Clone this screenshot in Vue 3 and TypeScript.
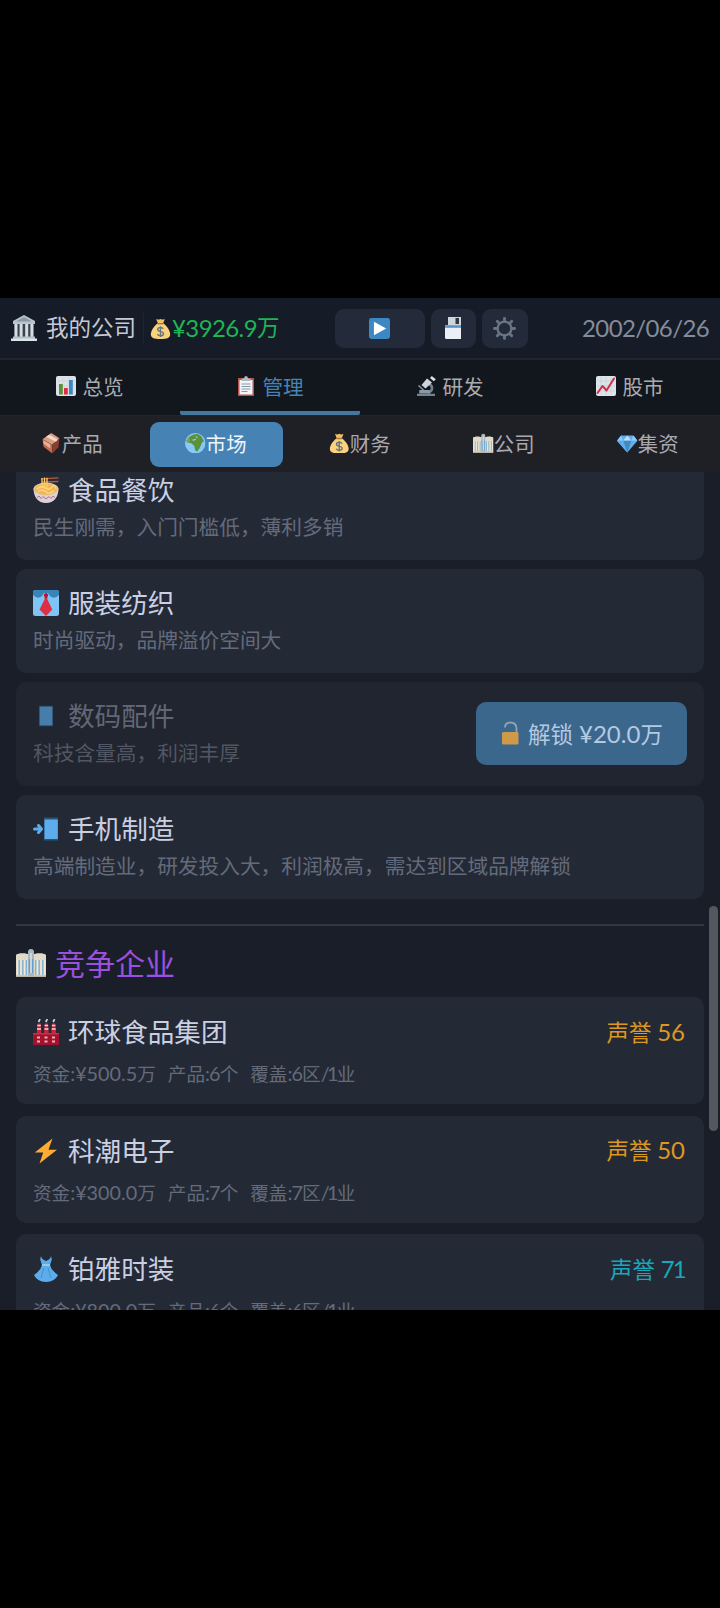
<script setup lang="ts">
interface Tab {
  icon: string
  label: string
}
interface Industry {
  icon: string
  name: string
  desc: string
  price?: string
}
interface Rival {
  icon: string
  name: string
  fame: number
  strong?: boolean
  funds: string
  products: number
  regions: number
}

const tabs: Tab[] = [
  { icon: 'chart', label: '总览' },
  { icon: 'clipboard', label: '管理' },
  { icon: 'microscope', label: '研发' },
  { icon: 'trend', label: '股市' },
]
const activeTab = '管理'

const subTabs: Tab[] = [
  { icon: 'box', label: '产品' },
  { icon: 'globe', label: '市场' },
  { icon: 'bag', label: '财务' },
  { icon: 'city', label: '公司' },
  { icon: 'gem', label: '集资' },
]
const activeSub = '市场'

const industries: Industry[] = [
  { icon: 'noodle', name: '食品餐饮', desc: '民生刚需，入门门槛低，薄利多销' },
  { icon: 'tie', name: '服装纺织', desc: '时尚驱动，品牌溢价空间大' },
  { icon: 'device', name: '数码配件', desc: '科技含量高，利润丰厚', price: '20.0' },
  { icon: 'phone', name: '手机制造', desc: '高端制造业，研发投入大，利润极高，需达到区域品牌解锁' },
]

const rivals: Rival[] = [
  { icon: 'factory', name: '环球食品集团', fame: 56, funds: '500.5', products: 6, regions: 6 },
  { icon: 'bolt', name: '科潮电子', fame: 50, funds: '300.0', products: 7, regions: 7 },
  { icon: 'dress', name: '铂雅时装', fame: 71, strong: true, funds: '800.0', products: 6, regions: 6 },
]
</script>

<template>
  <svg class="defs" aria-hidden="true">
    <symbol id="i-bank" viewBox="0 0 26 26">
      <path d="M13 0 24 6v3H2V6z" fill="#b9c5ce" />
      <path d="M13 2 21 6.5H5z" fill="#8998a4" />
      <path d="M3 9h20v13H3z" fill="#39434e" />
      <path d="M3.500 9h3v13h-3zM8.600 9h3v13h-3zM14.200 9h3v13h-3zM19.400 9h3v13h-3z" fill="#d5dde3" />
      <path d="M2 21.500h22V24H2z" fill="#b4bfc8" />
      <path d="M0 23.500h26V26H0z" fill="#dbe3e8" />
    </symbol>
    <symbol id="i-bag" viewBox="0 0 24 24">
      <path d="M7 1q2.500 1.500 5 0 2.500 1.500 5 0l-2 5H9z" fill="#f0c266" />
      <path d="M9 6h6c4 3 8 8 8 12.500C23 22.500 20 24 12 24S1 22.500 1 18.500C1 14 5 9 9 6z" fill="#fbd27c" />
      <path d="M8.500 6.500h7" stroke="#a9793a" stroke-width="1.600" />
      <path d="M15.300 12.300c-.8-1.200-2-1.500-3.300-1.500-2 0-3.200.9-3.200 2.400 0 3.400 6.600 1.400 6.600 4.700 0 1.500-1.400 2.400-3.400 2.400-1.600 0-2.900-.6-3.500-1.800M12 9.300v12.500" fill="none" stroke="#67757f" stroke-width="1.600" />
    </symbol>
    <symbol id="i-play" viewBox="0 0 22 22">
      <rect width="22" height="22" rx="2.500" fill="#3b88c3" />
      <path d="M5.200 4 18 11 5.200 18z" fill="#fff" />
    </symbol>
    <symbol id="i-save" viewBox="0 0 20 22">
      <path d="M5 0h13v8H5z" fill="#ccd6dd" />
      <path d="M12.500 1h3.500v6h-3.500z" fill="#31373d" />
      <path d="M2 8h16v14H3.500Q2 22 2 20.500z" fill="#e9eff4" />
      <path d="M2 8.200h16v2.600H2z" fill="#5a93cb" />
    </symbol>
    <symbol id="i-gear" viewBox="0 0 24 24">
      <circle cx="12" cy="12" r="7.200" fill="none" stroke="#66757f" stroke-width="2.500" />
      <path d="M12 1.500v3M12 19.500v3M1.500 12h3M19.500 12h3M4.500 4.500l2 2M17.500 17.500l2 2M4.500 19.500l2-2M17.500 6.500l2-2" stroke="#66757f" stroke-width="3" stroke-linecap="round" />
    </symbol>
    <symbol id="i-chart" viewBox="0 0 20 20">
      <rect width="20" height="20" rx="2" fill="#dbe3e8" />
      <path d="M6.500 1v18M13 1v18M1 5h18M1 10h18" stroke="#c5d0d8" stroke-width=".6" />
      <path d="M3 8h3.800v10.500H3z" fill="#5c9139" />
      <path d="M8 12h3.800v6.500H8z" fill="#dd2e44" />
      <path d="M13 4h3.800v14.500H13z" fill="#3b88c3" />
    </symbol>
    <symbol id="i-clipboard" viewBox="0 0 20 20">
      <path d="M2 2h16v18H2z" fill="#b6534c" />
      <path d="M3.500 4h13v14.500h-13z" fill="#f1f5f7" />
      <path d="M5.500 5V2.500H8Q8 0 10 0t2 2.500h2.500V5z" fill="#aebbc3" />
      <path d="M5.500 8h9M5.500 10.500h9M5.500 13h9M5.500 15.500h6" stroke="#8a9aa4" stroke-width="1.100" />
    </symbol>
    <symbol id="i-microscope" viewBox="0 0 20 20">
      <path d="M1 17.700h18V20H1z" fill="#74838e" />
      <path d="M13 8c4 1.500 4.500 7-1 9" fill="none" stroke="#74838e" stroke-width="2.500" />
      <path d="m2.500 9.500 6 5.500M4 14.800h9v2H4z" stroke="#8999a6" stroke-width="1.500" fill="#8999a6" />
      <path d="m11 2.500 5 4-6.500 6-4-3.500z" fill="#ccd6dd" />
      <path d="m14 2 1.800-2 4 3.200-2 2z" fill="#d9e2e8" />
    </symbol>
    <symbol id="i-trend" viewBox="0 0 20 20">
      <rect width="20" height="20" rx="2" fill="#dde5ea" />
      <path d="M5 1v18M10 1v18M15 1v18M1 5h18M1 10h18M1 15h18" stroke="#bfcbd3" stroke-width=".6" />
      <path d="m1.500 17 5-7 4 4.500L18 2.500" fill="none" stroke="#d22f4a" stroke-width="2" stroke-linejoin="round" stroke-linecap="round" />
    </symbol>
    <symbol id="i-box" viewBox="0 0 20 20">
      <path d="M1.500 6 10 0l8 5-7 6.500z" fill="#d99e82" />
      <path d="m1.500 6 9.500 5.500V20l-8.500-6.500z" fill="#c1694f" />
      <path d="m11 11.500 7-6.500-1 9-6 6z" fill="#8a3f2e" />
      <path d="M5 3.700 8 1.600l8.500 5-2 1.900z" fill="#f3d9cb" />
      <path d="m2 7 7 4v4l-6.500-4.500z" fill="#e3b3a0" />
    </symbol>
    <symbol id="i-globe" viewBox="0 0 20 20">
      <circle cx="10" cy="10" r="10" fill="#88c9f9" />
      <path d="M4.500 3.500Q9 .2 13 1.200l3 2.300 2.500 4.500-2 1.500-2 5-2.500 3.500-2-1-1-4.500-3-2.500-4-1 .5-3.500z" fill="#5c913b" />
      <path d="m10 3 2.500 1-1 1.300zM7 6.500l3-1 1 1-3 1.300z" fill="#88c9f9" />
      <path d="M1 7.500 4.200 4 5 7.500 2 9.500z" fill="#70a856" />
    </symbol>
    <symbol id="i-city" viewBox="0 0 30 28">
      <path d="M0 6.500Q0 5 1.500 5t2.500-.8h5q1 .8 3 .8h6q2 0 3-.8h5q1 .8 2.500.8T30 6.500V28H0z" fill="#e2dac9" />
      <path d="M3.200 11v15M6.800 11v15M10.300 11v15M19.700 11v15M23.200 11v15M26.800 11v15" stroke="#7fb2d4" stroke-width="1.400" />
      <path d="M1.400 11v15M5 11v15M8.600 11v15M21.400 11v15M25 11v15M28.600 11v15" stroke="#f2ecdf" stroke-width="1" />
      <path d="M12 28V3q0-3 3-3t3 3v25z" fill="#aab7bf" />
      <path d="M13.500 10v14M16.500 10v14" stroke="#5f9fce" stroke-width="1.200" />
      <path d="M15 4v20" stroke="#e6edf1" stroke-width="1.200" />
      <path d="M0 26.500h30V28H0z" fill="#bdb5a5" />
    </symbol>
    <symbol id="i-gem" viewBox="0 0 20 20">
      <path d="M4 2.500h12l4 5L10 19 0 7.500z" fill="#5dadec" />
      <path d="M4 2.500 6 7.500H0zM16 2.500l-2 5h6z" fill="#8ccaf7" />
      <path d="M10 2.500 6 7.500h8z" fill="#bddff6" />
      <path d="m6 7.500 4 11.500 4-11.500z" fill="#4289c1" />
      <path d="M0 7.500h6L10 19z" fill="#5dadec" />
    </symbol>
    <symbol id="i-noodle" viewBox="0 0 26 26">
      <path d="M25.500.8 8 2M25.500 4.500 9 5" stroke="#ad5d3d" stroke-width="1.300" />
      <path d="M.5 11.500q.5 14 12.500 14.500 12-.5 12.500-14.500z" fill="#dcd3da" />
      <ellipse cx="13" cy="12" rx="12.500" ry="6.500" fill="#e0c7a8" />
      <ellipse cx="13" cy="12.200" rx="11.300" ry="5.500" fill="#f4b653" />
      <path d="M9 1v10M11.500 .5V11M14 .8V11" stroke="#ffcc6b" stroke-width="1.300" />
      <path d="M4 12q4-4 8-1t7-1 4 2M5 14.500q4-3 8 .3t8-1.300" fill="none" stroke="#ffd983" stroke-width="1.300" />
      <path d="m4 20.500 2-1.500 2 2.500 2-2 3 2.500 3-2.500 2 2 2-2.500 2 1.500" fill="none" stroke="#be6f80" stroke-width="1" />
    </symbol>
    <symbol id="i-tie" viewBox="0 0 26 26">
      <rect width="26" height="26" rx="2.500" fill="#7ec4f5" />
      <path d="M2.500 0h21Q26 0 26 2.500V5q-5 5-9 1l-2-3h-4L9 6q-4 4-9-1V2.500Q0 0 2.500 0z" fill="#3785b8" />
      <path d="m10.800 4.500 2.200-1.500 2.200 1.500-1 4.500 5 10.500L13 26l-6.500-6.500L11.800 9z" fill="#dd2e44" />
      <path d="m10.800 4.500 2.200 4.500 2.200-4.500L13 3z" fill="#a71b35" />
    </symbol>
    <symbol id="i-device" viewBox="0 0 26 26">
      <path d="M6 2.500h14v21H6z" fill="#20415a" />
      <path d="M6.500 3.500h13v19h-13z" fill="#5dadec" />
    </symbol>
    <symbol id="i-phone" viewBox="0 0 26 26">
      <path d="M11 1.500h14v23H11z" fill="#285472" />
      <path d="M11.500 3.500h13.300V23H11.500z" fill="#5dadec" />
      <path d="M1.500 13h7M5.500 9.500 8.500 13l-3 3.500" stroke="#5dadec" stroke-width="3" fill="none" stroke-linecap="round" stroke-linejoin="round" />
    </symbol>
    <symbol id="i-lock" viewBox="0 0 18 24">
      <path d="M4 6.500q0-5 5.500-5T15.500 7v5" fill="none" stroke="#aab8c2" stroke-width="1.800" />
      <rect x="1" y="11" width="16.500" height="12.500" rx="1.500" fill="#ffac33" />
    </symbol>
    <symbol id="i-factory" viewBox="0 0 26 26">
      <path d="M4.500 4.500h3.200l.8 10H3.700zM11.800 4.500H15l.8 10H11zM19.100 4.500h3.200l.8 10h-4.800z" fill="#c8243f" />
      <path d="M4.300 6.500h3.500M4 10h4M11.600 6.500h3.500M11.400 10h4M18.900 6.500h3.500M18.700 10h4" stroke="#f1d6da" stroke-width="1.300" />
      <path d="m5.500 3 1.500-3M12.800 3l1.500-3M20.100 3l1.500-3" stroke="#ccd6dd" stroke-width="1.700" />
      <path d="M0 14h26v12H0z" fill="#a3122d" />
      <path d="M0 14h26v1.500H0z" fill="#d02c45" />
      <path d="M4 18.500h3M11.500 18.500h3M19 18.500h3M4 22.500h3M11.500 22.500h3M19 22.500h3" stroke="#e9b2bb" stroke-width="2" />
    </symbol>
    <symbol id="i-bolt" viewBox="0 0 26 26">
      <path d="M19.500.5 1.800 14.500h8.400L6.500 25.500 24 11.800h-8.500z" fill="#ffac33" />
    </symbol>
    <symbol id="i-dress" viewBox="0 0 26 26">
      <path d="M8 0q.5 3 2 3.500L13 5l3-1.500Q17.500 3 18 0l.8 3.500L17 9q1 5 8 10-3 6.500-12 7-9-.5-12-7 7-5 8-10L7.200 3.500z" fill="#5dadec" />
      <path d="M9 9h8" stroke="#a6d3f2" stroke-width="1.500" />
      <path d="m11 12-3 10M15 12l3 10" stroke="#4492cf" stroke-width="1" />
    </symbol>
  </svg>

  <div class="screen">
    <div class="app">
      <header class="topbar">
        <svg class="bank"><use href="#i-bank" /></svg>
        <span class="company">我的公司</span>
        <span class="money">
          <svg class="bag"><use href="#i-bag" /></svg><span class="num">¥3926.9</span>万
        </span>
        <div class="controls">
          <button class="ctl wide"><svg class="play"><use href="#i-play" /></svg></button>
          <button class="ctl"><svg class="save"><use href="#i-save" /></svg></button>
          <button class="ctl"><svg class="gear"><use href="#i-gear" /></svg></button>
        </div>
        <span class="date">2002/06/26</span>
      </header>

      <nav class="tabs">
        <a v-for="t in tabs" :key="t.label" class="tab" :class="{ on: t.label === activeTab }">
          <svg class="tab-icon"><use :href="`#i-${t.icon}`" /></svg>{{ t.label }}
        </a>
      </nav>

      <nav class="subtabs">
        <a v-for="t in subTabs" :key="t.label" class="subtab" :class="{ on: t.label === activeSub }">
          <svg class="sub-icon"><use :href="`#i-${t.icon}`" /></svg>{{ t.label }}
        </a>
      </nav>

      <main class="content">
        <section class="industries">
          <article v-for="i in industries" :key="i.name" class="card industry" :class="{ locked: i.price }">
            <div>
              <h3 class="name"><svg class="card-icon"><use :href="`#i-${i.icon}`" /></svg>{{ i.name }}</h3>
              <p class="desc">{{ i.desc }}</p>
            </div>
            <button v-if="i.price" class="unlock">
              <svg class="lock"><use href="#i-lock" /></svg>解锁<span class="num price">¥{{ i.price }}</span>万
            </button>
          </article>
        </section>

        <hr class="rule" />
        <h2 class="heading"><svg class="head-icon"><use href="#i-city" /></svg>竞争企业</h2>

        <section class="rivals">
          <article v-for="r in rivals" :key="r.name" class="card rival">
            <div class="row">
              <h3 class="name"><svg class="card-icon"><use :href="`#i-${r.icon}`" /></svg>{{ r.name }}</h3>
              <span class="fame" :class="{ strong: r.strong }">声誉 <span class="num">{{ r.fame }}</span></span>
            </div>
            <p class="meta">
              <span>资金<i>:¥{{ r.funds }}</i>万</span>
              <span>产品<i class="tight">:{{ r.products }}</i>个</span>
              <span>覆盖<i class="tight">:{{ r.regions }}</i>区<i class="slash">/1</i>业</span>
            </p>
          </article>
        </section>
        <div class="thumb"></div>
      </main>
    </div>
  </div>
</template>

<style>
body {
  background: #000;
}
</style>

<style scoped>
.defs {
  position: absolute;
  width: 0;
  height: 0;
}
.screen {
  box-sizing: border-box;
  width: 720px;
  height: 1608px;
  padding-top: 298px;
  background: #000;
  font-family: Lato, "Noto Sans CJK SC", sans-serif;
  font-weight: 400;
}
.app {
  height: 1012px;
  display: flex;
  flex-direction: column;
  overflow: hidden;
  background: #1a1e28;
}
svg {
  flex: none;
  display: block;
}
button {
  border: 0;
  font: inherit;
}
h2, h3, p {
  margin: 0;
  font-weight: 400;
  white-space: nowrap;
}
i {
  font-style: normal;
}
.topbar {
  box-sizing: border-box;
  height: 62px;
  flex: none;
  display: flex;
  align-items: center;
  padding: 0 10px 0 11px;
  background: #151c27;
  border-bottom: 2px solid #202630;
  font-size: 22.500px;
  color: #c6c8d8;
  white-space: nowrap;
}
.bank {
  width: 26px;
  height: 26px;
  margin-right: 9px;
}
.company {
  height: 30px;
  line-height: 30px;
  padding-right: 7px;
  border-right: 1px solid #1e2530;
}
.money {
  display: flex;
  align-items: center;
  line-height: 28px;
  margin-left: 6px;
  color: #1fb455;
}
.bag {
  width: 21px;
  height: 23px;
  margin-right: 1px;
}
.money .num {
  font-size: 24px;
  letter-spacing: -0.600px;
}
.controls {
  display: flex;
  gap: 6px;
  margin-left: auto;
}
.ctl {
  display: flex;
  align-items: center;
  justify-content: center;
  width: 45.500px;
  height: 39px;
  padding: 0;
  border-radius: 9px;
  background: #232a39;
}
.wide {
  width: 90px;
}
.play {
  width: 21px;
  height: 21px;
}
.save {
  width: 20px;
  height: 22px;
}
.gear {
  width: 23px;
  height: 23px;
}
.date {
  width: 128px;
  margin-left: 54.500px;
  font-size: 24px;
  letter-spacing: -0.600px;
  line-height: 28px;
  color: #858b9a;
}
.tabs {
  box-sizing: border-box;
  height: 56px;
  flex: none;
  display: flex;
  background: #12171d;
  border-bottom: 1px solid #24262c;
}
.tab {
  box-sizing: border-box;
  flex: 1;
  display: flex;
  align-items: center;
  justify-content: center;
  gap: 6px;
  padding-top: 1px;
  border-bottom: 4px solid transparent;
  border-radius: 2px;
  font-size: 20.600px;
  color: #a9abb0;
}
.tab.on {
  color: #4682b4;
  border-bottom-color: #46789f;
}
.tab-icon {
  width: 20px;
  height: 20px;
}
.subtabs {
  height: 56px;
  flex: none;
  display: flex;
  align-items: center;
  background: #1f1f26;
}
.subtab {
  box-sizing: border-box;
  flex: 1;
  display: flex;
  align-items: center;
  justify-content: center;
  gap: 0;
  height: 45px;
  margin: 0 5.500px;
  padding-bottom: 2px;
  border-radius: 9px;
  font-size: 20.400px;
  color: #a9a9ae;
}
.subtab.on {
  background: #4682b4;
  color: #eef5fb;
}
.sub-icon {
  width: 20.500px;
  height: 20.500px;
}
.content {
  position: relative;
  flex: 1;
  min-height: 0;
  overflow: hidden;
  padding: 0 16px;
}
.industries {
  display: flex;
  flex-direction: column;
  gap: 8.500px;
  margin-top: -16.500px;
}
.card {
  box-sizing: border-box;
  border-radius: 10px;
  padding: 0 17px;
  background: #232a36;
}
.industry {
  display: flex;
  justify-content: space-between;
  align-items: center;
  height: 104.500px;
}
.name {
  display: flex;
  align-items: center;
  gap: 9px;
  font-size: 26.600px;
  line-height: 32px;
  color: #cbcfe2;
}
.card-icon {
  width: 26px;
  height: 26px;
}
.desc {
  margin-top: 7px;
  font-size: 20.700px;
  line-height: 28px;
  color: #656a7b;
}
.locked {
  background: #20252f;
}
.locked .name {
  color: #626776;
}
.locked .card-icon {
  opacity: 0.650;
}
.locked .desc {
  color: #515664;
}
.unlock {
  display: flex;
  align-items: center;
  width: 211px;
  height: 63px;
  padding: 0 0 1px 25px;
  border-radius: 10px;
  background: #3c678c;
  color: #b2cae2;
  font-size: 22.500px;
  white-space: nowrap;
}
.lock {
  width: 18px;
  height: 24px;
  margin-right: 9px;
  opacity: 0.750;
}
.price {
  margin-left: 6px;
  font-size: 24px;
}
.rule {
  height: 2px;
  margin: 25px 0 0;
  border: 0;
  background: #323640;
}
.heading {
  display: flex;
  align-items: center;
  gap: 9px;
  height: 40px;
  margin: 17px 0 14px;
  font-size: 30px;
  line-height: 40px;
  color: #9a50e0;
}
.head-icon {
  width: 30px;
  height: 28px;
}
.rivals {
  display: flex;
  flex-direction: column;
  gap: 11.500px;
}
.rival {
  height: 107px;
  flex: none;
  padding-top: 19px;
}
.row {
  display: flex;
  align-items: center;
  justify-content: space-between;
}
.fame {
  padding-right: 2px;
  font-size: 22.500px;
  line-height: 30px;
  color: #dc9820;
}
.fame .num {
  font-size: 24px;
}
.fame.strong {
  color: #18a8bc;
}
.fame.strong .num {
  letter-spacing: -1.800px;
}
.meta {
  display: flex;
  gap: 12px;
  margin-top: 11px;
  font-size: 18.600px;
  line-height: 28px;
  color: #656a7b;
}
.meta i {
  font-size: 19.800px;
}
.meta .tight {
  letter-spacing: -0.900px;
}
.meta .slash {
  letter-spacing: -2.700px;
  margin-right: 1px;
}
.thumb {
  position: absolute;
  right: 2px;
  top: 434px;
  width: 9px;
  height: 225px;
  border-radius: 4.500px;
  background: #54575d;
}
</style>
